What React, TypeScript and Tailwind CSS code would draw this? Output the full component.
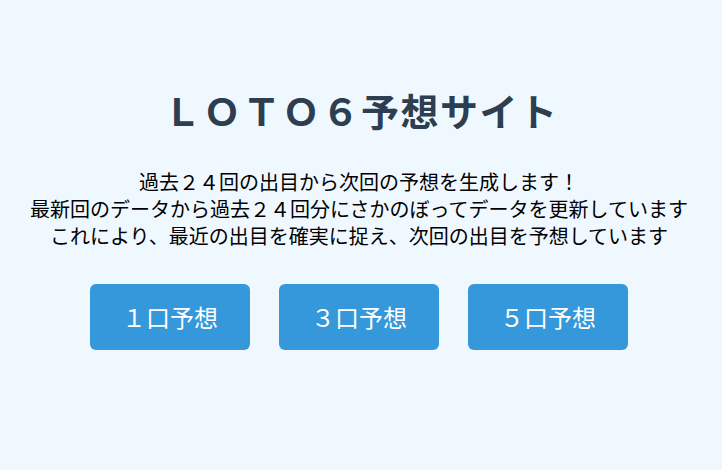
import React from 'react';

const FONT = { fontFamily: '"Noto Sans CJK JP", "Noto Sans", sans-serif' };

export default function App() {
  const buttons = ['１口予想', '３口予想', '５口予想'];

  return (
    <div className="min-h-[470px] w-full bg-[#f0f8ff] flex flex-col items-center pt-[84px]" style={FONT}>
      <h1 className="text-[38px] font-bold text-[#2c3e50] tracking-[1.5px] leading-[52px]">ＬＯＴＯ６予想サイト</h1>
      <div className="mt-[32px] mr-[4px] text-[20px] leading-[27px] text-black text-center">
        <p>過去２４回の出目から次回の予想を生成します！</p>
        <p>最新回のデータから過去２４回分にさかのぼってデータを更新しています</p>
        <p>これにより、最近の出目を確実に捉え、次回の出目を予想しています</p>
      </div>
      <div className="mt-[35px] mr-[4px] flex gap-[29px]">
        {buttons.map((b) => (
          <button
            key={b}
            className="w-[160px] h-[66px] rounded-[6px] bg-[#3498db] text-white text-[24px]"
          >
            {b}
          </button>
        ))}
      </div>
    </div>
  );
}
